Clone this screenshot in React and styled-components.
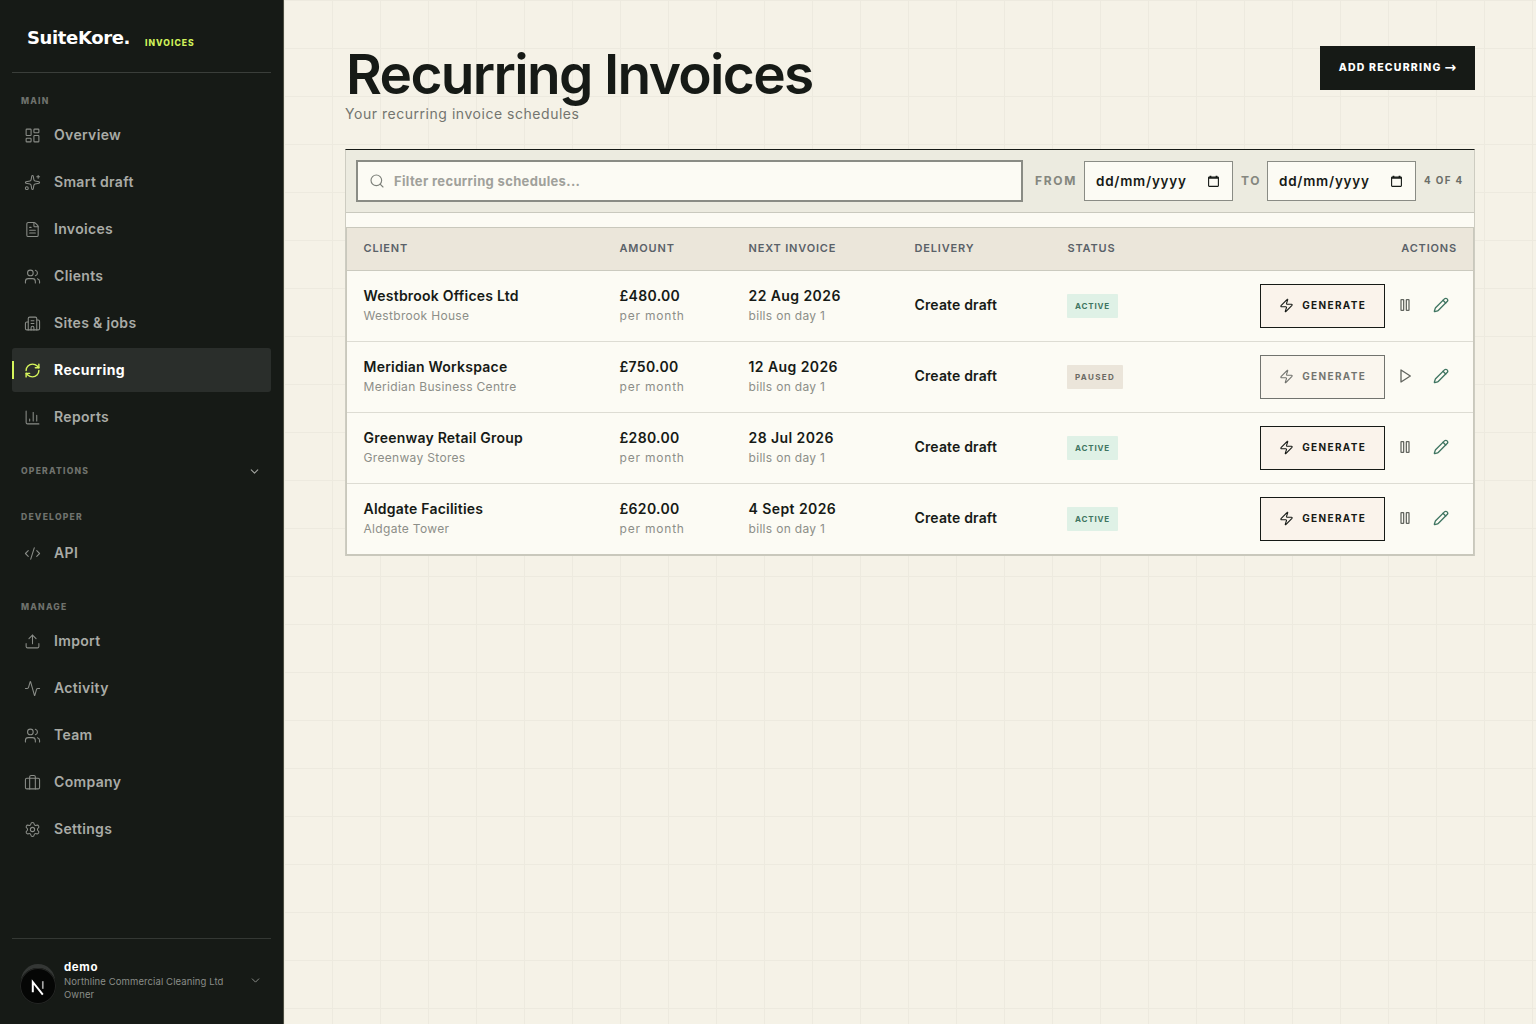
import React from "react";
import styled, { createGlobalStyle, css } from "styled-components";
import {
  LayoutDashboard,
  Sparkles,
  FileText,
  Users,
  Building2,
  RefreshCw,
  BarChart3,
  ChevronDown,
  CodeXml,
  Upload,
  Activity,
  Settings,
  Search,
  Zap,
  Pencil,
} from "lucide-react";

const CompanyIcon = ({ size = 17, strokeWidth = 1.5 }) => (
  <svg
    width={size}
    height={size}
    viewBox="0 0 24 24"
    fill="none"
    stroke="currentColor"
    strokeWidth={strokeWidth}
    strokeLinecap="round"
    strokeLinejoin="round"
  >
    <rect x="2" y="6" width="20" height="15" rx="2" />
    <path d="M8 21V4a2 2 0 0 1 2-2h4a2 2 0 0 1 2 2v17" />
  </svg>
);

const PauseIcon = () => (
  <svg width="16" height="16" viewBox="0 0 24 24" fill="none" stroke="currentColor" strokeWidth="1.9">
    <rect x="6" y="4" width="4" height="16" rx="0.6" />
    <rect x="14" y="4" width="4" height="16" rx="0.6" />
  </svg>
);

const PlayIcon = () => (
  <svg
    width="16"
    height="16"
    viewBox="0 0 24 24"
    fill="none"
    stroke="currentColor"
    strokeWidth="2"
    strokeLinejoin="round"
  >
    <path d="M6 3l14 9-14 9z" />
  </svg>
);

const CalendarIcon = () => (
  <svg width="13" height="13" viewBox="0 0 13 13" fill="none">
    <rect x="1.6" y="2.1" width="9.8" height="9.3" rx="0.6" stroke="#161a16" strokeWidth="1.1" />
    <path d="M1.5 3h10M3.5 0.8v2M9.5 0.8v2" stroke="#161a16" strokeWidth="1.7" />
  </svg>
);

const mainLinks = [
  { label: "Overview", icon: LayoutDashboard },
  { label: "Smart draft", icon: Sparkles },
  { label: "Invoices", icon: FileText },
  { label: "Clients", icon: Users },
  { label: "Sites & jobs", icon: Building2 },
  { label: "Recurring", icon: RefreshCw, active: true },
  { label: "Reports", icon: BarChart3 },
];

const manageLinks = [
  { label: "Import", icon: Upload },
  { label: "Activity", icon: Activity },
  { label: "Team", icon: Users },
  { label: "Company", icon: CompanyIcon },
  { label: "Settings", icon: Settings },
];

const schedules = [
  { client: "Westbrook Offices Ltd", site: "Westbrook House", amount: "£480.00", next: "22 Aug 2026", active: true },
  { client: "Meridian Workspace", site: "Meridian Business Centre", amount: "£750.00", next: "12 Aug 2026", active: false },
  { client: "Greenway Retail Group", site: "Greenway Stores", amount: "£280.00", next: "28 Jul 2026", active: true },
  { client: "Aldgate Facilities", site: "Aldgate Tower", amount: "£620.00", next: "4 Sept 2026", active: true },
];

const NavLinks = ({ links }) => (
  <Nav>
    {links.map(({ label, icon: Icon, active }) => (
      <NavItem key={label} $active={active}>
        <Icon size={17} strokeWidth={active ? 2 : 1.5} />
        <span>{label}</span>
      </NavItem>
    ))}
  </Nav>
);

const App = () => {
  return (
    <Page>
      <GlobalStyle />
      <Sidebar>
        <Brand>
          <h2>SuiteKore.</h2>
          <span>INVOICES</span>
        </Brand>
        <GroupLabel $height="40px" $top="15px">
          MAIN
        </GroupLabel>
        <NavLinks links={mainLinks} />
        <GroupLabel $height="64px">
          OPERATIONS
          <ChevronDown size={13} strokeWidth={2} />
        </GroupLabel>
        <GroupLabel $height="28px">DEVELOPER</GroupLabel>
        <NavLinks links={[{ label: "API", icon: CodeXml }]} />
        <GroupLabel $height="44px" $top="19px">
          MANAGE
        </GroupLabel>
        <NavLinks links={manageLinks} />
        <Account>
          <Avatar>
            <Badge>
              <svg width="36" height="36" viewBox="0 0 36 36" fill="none">
                <path d="M12.8 24.2V14l10 12.6" stroke="#fff" strokeWidth="2" />
                <path d="M22.8 13.2v7.6" stroke="#a5a5a5" strokeWidth="1.7" />
              </svg>
            </Badge>
          </Avatar>
          <div className="who">
            <strong>demo</strong>
            <p>Northline Commercial Cleaning Ltd</p>
            <p>Owner</p>
          </div>
          <ChevronDown size={13} strokeWidth={1.8} />
        </Account>
      </Sidebar>

      <Main>
        <Header>
          <div>
            <h1>Recurring Invoices</h1>
            <p>Your recurring invoice schedules</p>
          </div>
          <AddButton>
            ADD RECURRING <span>→</span>
          </AddButton>
        </Header>

        <Panel>
          <Toolbar>
            <SearchBox>
              <Search size={16} strokeWidth={1.7} />
              <span>Filter recurring schedules...</span>
            </SearchBox>
            <FilterLabel $width="49px" $gap="12px">
              FROM
            </FilterLabel>
            <DateField>
              <span>dd/mm/yyyy</span>
              <CalendarIcon />
            </DateField>
            <FilterLabel $width="26px" $gap="8px">
              TO
            </FilterLabel>
            <DateField>
              <span>dd/mm/yyyy</span>
              <CalendarIcon />
            </DateField>
            <Count>4 OF 4</Count>
          </Toolbar>

          <Table>
            <HeadRow>
              <span>CLIENT</span>
              <span>AMOUNT</span>
              <span>NEXT INVOICE</span>
              <span>DELIVERY</span>
              <span>STATUS</span>
              <span className="actions">ACTIONS</span>
            </HeadRow>
            {schedules.map((row) => (
              <Row key={row.client}>
                <Cell>
                  <strong>{row.client}</strong>
                  <small>{row.site}</small>
                </Cell>
                <Cell $spacing="0.3px" $subSpacing="0.8px">
                  <strong>{row.amount}</strong>
                  <small>per month</small>
                </Cell>
                <Cell $spacing="0.42px">
                  <strong>{row.next}</strong>
                  <small>bills on day 1</small>
                </Cell>
                <Cell $spacing="0.15px">
                  <strong>Create draft</strong>
                </Cell>
                <StatusCell>
                  <Status $active={row.active}>{row.active ? "ACTIVE" : "PAUSED"}</Status>
                </StatusCell>
                <Actions>
                  <GenerateButton disabled={!row.active}>
                    <Zap size={15} strokeWidth={1.8} />
                    GENERATE
                  </GenerateButton>
                  <IconButton>{row.active ? <PauseIcon /> : <PlayIcon />}</IconButton>
                  <IconButton $green>
                    <Pencil size={16} strokeWidth={2} />
                  </IconButton>
                </Actions>
              </Row>
            ))}
          </Table>
        </Panel>
      </Main>
    </Page>
  );
};

const GlobalStyle = createGlobalStyle`
  * {
    box-sizing: border-box;
    margin: 0;
    padding: 0;
  }
  body {
    font-family: Inter, "Open Sans", sans-serif;
    color: #161a16;
    background: #f5f2e7;
  }
  button {
    font-family: inherit;
  }
`;

const Page = styled.div`
  display: flex;
  width: 1536px;
  height: 1024px;
  overflow: hidden;
`;

const Sidebar = styled.aside`
  display: flex;
  flex-direction: column;
  width: 284px;
  padding: 0 12px;
  background: #161a16;
  border-right: 1px solid #4c4e42;
  flex-shrink: 0;
`;

const Brand = styled.div`
  display: flex;
  align-items: flex-start;
  height: 73px;
  padding: 27px 0 0 15px;
  border-bottom: 1px solid #3a3e3a;
  h2 {
    width: 118px;
    font-family: "DejaVu Sans", sans-serif;
    font-size: 18px;
    line-height: 21px;
    font-weight: 700;
    letter-spacing: -0.36px;
    color: #fff;
  }
  span {
    padding-top: 10px;
    font-size: 8.6px;
    line-height: 12px;
    font-weight: 800;
    letter-spacing: 1px;
    color: #d0f25a;
  }
`;

const GroupLabel = styled.div`
  display: flex;
  align-items: center;
  justify-content: space-between;
  height: ${(props) => props.$height};
  padding: ${(props) => props.$top || 0} 10px 0 9px;
  font-size: 8.6px;
  font-weight: 800;
  letter-spacing: 1.2px;
  color: #6f726d;
  svg {
    color: #a3a5a1;
  }
`;

const Nav = styled.nav`
  display: flex;
  flex-direction: column;
  gap: 3px;
`;

const NavItem = styled.a`
  display: flex;
  align-items: center;
  gap: 13px;
  height: 44px;
  padding-left: 12px;
  border-radius: 3px;
  font-size: 14px;
  font-weight: 600;
  letter-spacing: 0.33px;
  color: #a9aba6;
  svg {
    color: #8a8d88;
  }
  span {
    padding-bottom: 2px;
  }
  ${(props) =>
    props.$active &&
    css`
      color: #fff;
      font-weight: 700;
      letter-spacing: 0.42px;
      background: linear-gradient(#d6f55c, #d6f55c) 0 50% / 2px 18px no-repeat, #2a2e2b;
      svg {
        color: #d6f55c;
      }
    `}
`;

const Account = styled.div`
  display: flex;
  align-items: center;
  height: 86px;
  margin-top: auto;
  padding: 0 9px 2px 9px;
  border-top: 1px solid #343834;
  color: #8a8d88;
  .who {
    flex: 1;
    padding: 0 0 2px 9px;
  }
  strong {
    display: block;
    font-size: 11.5px;
    line-height: 16px;
    font-weight: 700;
    letter-spacing: 0.6px;
    color: #fff;
  }
  p {
    font-size: 9.5px;
    line-height: 13px;
    letter-spacing: 0.1px;
  }
`;

const Avatar = styled.div`
  width: 34px;
  height: 34px;
  border-radius: 50%;
  background: #343735;
`;

const Badge = styled.div`
  position: relative;
  top: 4px;
  left: -1px;
  width: 36px;
  height: 36px;
  border-radius: 50%;
  background: #050605;
  box-shadow: inset 0 0 0 1px #242624;
`;

const Main = styled.main`
  flex: 1;
  padding: 46px 61px 0;
  background: linear-gradient(#edeadf 1px, transparent 1px) 0 0 / 48px 48px,
    linear-gradient(90deg, #edeadf 1px, transparent 1px) 0 0 / 48px 48px, #f5f2e7;
`;

const Header = styled.header`
  display: flex;
  justify-content: space-between;
  align-items: flex-start;
  height: 103px;
  h1 {
    padding-left: 1px;
    font-size: 55px;
    line-height: 56px;
    font-weight: 600;
    letter-spacing: -1.65px;
  }
  p {
    font-size: 14px;
    line-height: 24px;
    letter-spacing: 0.53px;
    color: #73756f;
  }
`;

const AddButton = styled.button`
  display: flex;
  align-items: center;
  justify-content: center;
  gap: 3px;
  width: 155px;
  height: 44px;
  padding-bottom: 1px;
  border: 0;
  background: #161a16;
  color: #fff;
  font-size: 10.5px;
  font-weight: 800;
  letter-spacing: 1.2px;
  span {
    font-family: "DejaVu Sans", sans-serif;
    font-size: 14px;
    line-height: 13px;
    letter-spacing: 0;
  }
`;

const Panel = styled.section`
  border: 1px solid #cdccc1;
  border-top-color: #161a16;
  border-bottom: 0;
  background: #fcfbf4;
`;

const Toolbar = styled.div`
  display: flex;
  align-items: center;
  height: 63px;
  padding: 0 10px;
  background: #ecebe0;
  border-bottom: 1px solid #c9c9be;
`;

const SearchBox = styled.div`
  display: flex;
  align-items: center;
  gap: 9px;
  width: 667px;
  height: 42px;
  padding-left: 11px;
  border: 2px solid #8a8c85;
  background: #fcfbf4;
  color: #7d807a;
  span {
    font-size: 13px;
    font-weight: 700;
    letter-spacing: 0.34px;
    color: #a0a19b;
  }
`;

const FilterLabel = styled.span`
  width: ${(props) => props.$width};
  margin-left: ${(props) => props.$gap};
  padding-bottom: 1px;
  font-size: 12px;
  font-weight: 700;
  letter-spacing: 1.7px;
  color: #85877f;
`;

const DateField = styled.div`
  display: flex;
  align-items: center;
  justify-content: space-between;
  width: 149px;
  height: 40px;
  padding: 0 12px 0 11px;
  border: 1px solid #8a8c85;
  background: #fcfbf4;
  font-size: 13.5px;
  font-weight: 600;
  letter-spacing: 0.75px;
`;

const Count = styled.span`
  margin-left: 8px;
  padding-bottom: 1px;
  font-size: 9.8px;
  font-weight: 700;
  letter-spacing: 1.4px;
  white-space: nowrap;
  color: #6b6e68;
`;

const Table = styled.div`
  margin-top: 14px;
  border: 1px solid #c9c8bc;
  border-bottom-width: 2px;
`;

const columns = css`
  display: grid;
  grid-template-columns: 256px 129px 166px 153px 120px 1fr;
  align-items: center;
  padding-left: 16.5px;
`;

const HeadRow = styled.div`
  ${columns}
  height: 43px;
  padding-right: 16px;
  padding-bottom: 2px;
  background: #ebe6da;
  border-bottom: 1px solid #cbcabf;
  font-size: 11px;
  font-weight: 600;
  letter-spacing: 0.83px;
  color: #5a6168;
  .actions {
    text-align: right;
  }
`;

const Row = styled.div`
  ${columns}
  height: 71px;
  border-bottom: 1px solid #dddcd3;
  &:last-child {
    height: 70px;
    border-bottom: 0;
  }
`;

const Cell = styled.div`
  padding-bottom: 2px;
  strong {
    display: block;
    font-size: 14px;
    line-height: 20px;
    font-weight: 600;
    letter-spacing: ${(props) => props.$spacing || "0.22px"};
  }
  small {
    display: block;
    font-size: 12px;
    line-height: 19px;
    letter-spacing: ${(props) => props.$subSpacing || "0.32px"};
    color: #8c8e88;
  }
`;

const StatusCell = styled.div`
  display: flex;
  margin-left: -0.5px;
`;

const Status = styled.span`
  height: 24px;
  padding: 0 7.5px 0 8px;
  line-height: 24px;
  border-radius: 1px;
  font-size: 8px;
  font-weight: 700;
  letter-spacing: ${(props) => (props.$active ? "0.85px" : "1.35px")};
  color: ${(props) => (props.$active ? "#3f7561" : "#6b6a64")};
  background: ${(props) => (props.$active ? "#dff1e6" : "#ebe5da")};
`;

const Actions = styled.div`
  display: flex;
  justify-content: flex-end;
  align-items: center;
  padding-right: 14.5px;
`;

const GenerateButton = styled.button`
  display: flex;
  align-items: center;
  justify-content: center;
  gap: 8.5px;
  width: 125px;
  height: 44px;
  margin-right: 1.5px;
  padding-bottom: 2px;
  border: 1px solid #161a16;
  background: #faf3eb;
  color: #161a16;
  font-size: 10px;
  font-weight: 700;
  letter-spacing: 1.35px;
  opacity: ${(props) => (props.disabled ? 0.6 : 1)};
`;

const IconButton = styled.button`
  display: flex;
  align-items: center;
  justify-content: center;
  width: 36px;
  height: 36px;
  padding-bottom: 2px;
  border: 0;
  background: none;
  color: ${(props) => (props.$green ? "#3f7561" : "#62655f")};
`;

export default App;
